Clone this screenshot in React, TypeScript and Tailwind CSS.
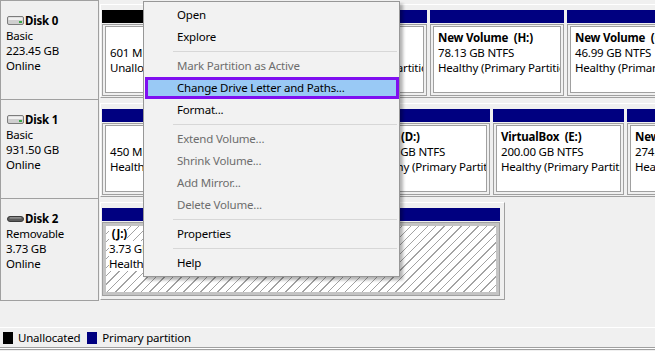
import React from "react";

type Part = {
  w: string;
  head: string;
  name?: string;
  size: string;
  status: string;
};

function DiskIcon({ removable }: { removable?: boolean }) {
  if (removable) {
    return (
      <svg width="17" height="8" viewBox="0 0 17 8" className="mr-px shrink-0">
        <rect x="0.5" y="1.5" width="16" height="5" rx="2.5" fill="#5c5c5c" stroke="#3a3a3a" />
        <rect x="2.5" y="2.2" width="12" height="1.4" rx="0.7" fill="#9c9c9c" />
      </svg>
    );
  }
  return (
    <svg width="17" height="9" viewBox="0 0 17 9" className="mr-px shrink-0">
      <rect x="0.5" y="0.5" width="16" height="8" rx="1.5" fill="#cfcfcf" stroke="#7c7c7c" />
      <rect x="1.5" y="1.5" width="14" height="2.5" fill="#f1f1f1" />
      <rect x="12" y="5" width="3" height="2" fill="#39a844" />
    </svg>
  );
}

function DiskLabel({
  name,
  kind,
  size,
  removable,
  last,
}: {
  name: string;
  kind: string;
  size: string;
  removable?: boolean;
  last?: boolean;
}) {
  return (
    <div
      className={`w-[99px] shrink-0 border-l border-t border-r border-[#a0a0a0] bg-[#f0f0f0] pl-[5px] pt-[12px] leading-[15px] text-black ${
        last ? "border-b" : ""
      }`}
    >
      <div className="flex h-[15px] items-center pl-px font-bold">
        <DiskIcon removable={removable} />
        {name}
      </div>
      <div>{kind}</div>
      <div>{size}</div>
      <div>Online</div>
    </div>
  );
}

function Partition({ w, head, name, size, status }: Part) {
  return (
    <div className={`${w} flex min-w-0 flex-col`}>
      <div className={`h-[13px] shrink-0 ${head}`} />
      <div className="mt-px min-h-0 flex-1 border border-[#a0a0a0] bg-[#f0f0f0] pb-[2px] pl-[2px] pr-[2px] pt-px">
        <div className="h-full overflow-hidden whitespace-pre border border-[#a0a0a0] bg-white pl-[4px] pt-[3px] leading-[15px] text-black">
          <div className="h-[15px] font-bold">{name}</div>
          <div>{size}</div>
          <div>{status}</div>
        </div>
      </div>
    </div>
  );
}

const disk0: Part[] = [
  { w: "w-[187px]", head: "bg-black", size: "601 MB", status: "Unallocated" },
  { w: "w-[135px]", head: "bg-[#000080]", name: "New Volume  (C:)", size: "222.87 GB NTFS", status: "Healthy (Primary Partition)" },
  { w: "w-[134px]", head: "bg-[#000080]", name: "New Volume  (H:)", size: "78.13 GB NTFS", status: "Healthy (Primary Partition)" },
  { w: "flex-1", head: "bg-[#000080]", name: "New Volume  (G:)", size: "46.99 GB NTFS", status: "Healthy (Primary Partition)" },
];

const disk1: Part[] = [
  { w: "w-[256px]", head: "bg-[#000080]", size: "450 MB NTFS", status: "Healthy (Recovery Partition)" },
  { w: "w-[129px]", head: "bg-[#000080]", name: "Docs  (D:)", size: "97.66 GB NTFS", status: "Healthy (Primary Partition)" },
  { w: "w-[131px]", head: "bg-[#000080]", name: "VirtualBox  (E:)", size: "200.00 GB NTFS", status: "Healthy (Primary Partition)" },
  { w: "flex-1", head: "bg-[#000080]", name: "New Volume  (F:)", size: "274.05 GB NTFS", status: "Healthy (Primary Partition)" },
];

function MenuItem({ label, disabled, active }: { label: string; disabled?: boolean; active?: boolean }) {
  if (active) {
    return (
      <div className="ml-px flex h-[22px] items-center border-[3px] border-[#7f0ff0] bg-[#99c9f5] pl-[29px] text-black">
        {label}
      </div>
    );
  }
  return (
    <div className={`flex h-[22px] items-center pl-[33px] ${disabled ? "text-[#6d6d6d]" : "text-black"}`}>
      {label}
    </div>
  );
}

function Separator() {
  return (
    <div className="flex h-[7px] items-center pl-[29px] pr-[2px]">
      <div className="h-px w-full bg-[#d7d7d7]" />
    </div>
  );
}

export default function App() {
  return (
    <div className="relative h-[351px] w-[655px] overflow-hidden bg-[#f0f0f0] font-['Noto_Sans',sans-serif] text-[11.5px] tracking-[-0.2px]">
      {/* Disk 0 */}
      <div className="flex h-[99px]">
        <DiskLabel name="Disk 0" kind="Basic" size="223.45 GB" />
        <div className="mb-px ml-px mr-px mt-[4px] flex flex-1 gap-[3px] border border-white border-b-[#a0a0a0] border-r-[#a0a0a0] pb-px pl-px pt-[5px]">
          {disk0.map((p, i) => (
            <Partition key={i} {...p} />
          ))}
        </div>
      </div>

      {/* Disk 1 */}
      <div className="flex h-[99px]">
        <DiskLabel name="Disk 1" kind="Basic" size="931.50 GB" />
        <div className="mb-px ml-px mr-px mt-[4px] flex flex-1 gap-[3px] border border-white border-b-[#a0a0a0] border-r-[#a0a0a0] pb-px pl-px pt-[5px]">
          {disk1.map((p, i) => (
            <Partition key={i} {...p} />
          ))}
        </div>
      </div>

      {/* Disk 2 */}
      <div className="flex h-[103px]">
        <DiskLabel name="Disk 2" kind="Removable" size="3.73 GB" removable last />
        <div className="mb-px ml-px mt-[4px] flex w-[405px] border border-white border-b-[#a0a0a0] border-r-[#a0a0a0] pb-[3px] pl-px pr-[4px] pt-[5px]">
          <div className="flex flex-1 flex-col">
            <div className="h-[13px] shrink-0 bg-[#000080]" />
            <div className="mt-px flex-1 border border-[#a0a0a0]">
              <div className="h-full whitespace-pre border-[3px] border-[#c4c4c4] bg-[repeating-linear-gradient(135deg,#ffffff_0px,#ffffff_5px,#a3a3a3_5px,#a3a3a3_6px)] pl-[3px] pt-0 leading-[15px] text-black">
                <div className="font-bold">
                  <span className="bg-white"> (J:)</span>
                </div>
                <div>
                  <span className="bg-white">3.73 GB FAT32</span>
                </div>
                <div>
                  <span className="bg-white">Healthy (Primary Partition)</span>
                </div>
              </div>
            </div>
          </div>
        </div>
      </div>

      {/* Legend */}
      <div className="mt-[26px] flex h-[21px] items-center border-b border-t border-b-[#a0a0a0] border-t-white pl-[3px] text-black">
        <div className="h-[12px] w-[10px] bg-black" />
        <span className="ml-[5px]">Unallocated</span>
        <div className="ml-[7px] h-[12px] w-[10px] bg-[#000080]" />
        <span className="ml-[5px]">Primary partition</span>
      </div>
      <div className="h-px bg-white" />
      <div className="h-px bg-[#a0a0a0]" />

      {/* Context menu */}
      <div className="absolute left-[143px] top-[1px] w-[257px] border border-[#979797] bg-[#f2f2f2] py-[2px] shadow-[3px_3px_3px_rgba(0,0,0,0.3)]">
        <MenuItem label="Open" />
        <MenuItem label="Explore" />
        <Separator />
        <MenuItem label="Mark Partition as Active" disabled />
        <MenuItem label="Change Drive Letter and Paths..." active />
        <MenuItem label="Format..." />
        <Separator />
        <MenuItem label="Extend Volume..." disabled />
        <MenuItem label="Shrink Volume..." disabled />
        <MenuItem label="Add Mirror..." disabled />
        <MenuItem label="Delete Volume..." disabled />
        <Separator />
        <MenuItem label="Properties" />
        <Separator />
        <MenuItem label="Help" />
      </div>
    </div>
  );
}
